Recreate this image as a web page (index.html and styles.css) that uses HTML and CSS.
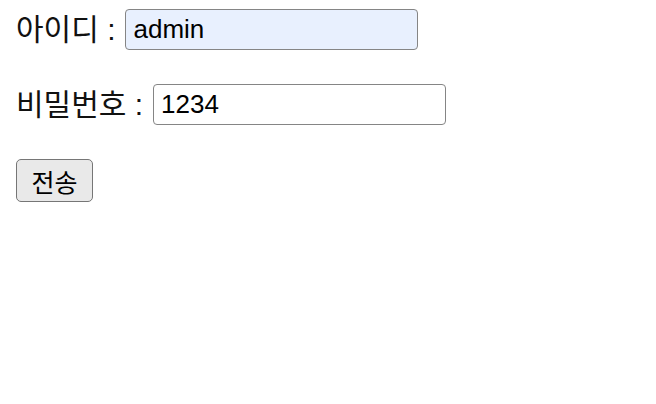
FILE: index.html
```html
<!DOCTYPE html>
<html lang="ko">
<head>
<meta charset="utf-8">
<link rel="stylesheet" href="styles.css">
</head>
<body>
<form class="form">
  <div class="row">
    <label class="label" for="id">아이디 :</label>
    <input class="field field-auto" id="id" type="text" value="admin">
  </div>
  <div class="row">
    <label class="label" for="pw">비밀번호 :</label>
    <input class="field" id="pw" type="text" value="1234">
  </div>
  <div class="row">
    <button class="btn" type="button">전송</button>
  </div>
</form>
</body>
</html>
```
FILE: styles.css
```css
html, body {
  margin: 0;
  background: #ffffff;
}
body {
  padding: 9px 16px;
  font-family: "Liberation Sans", "Noto Sans CJK KR", Arial, sans-serif;
  color: #000;
}
.form {
  display: flex;
  flex-direction: column;
  gap: 34px;
  margin: 0;
}
.row {
  display: flex;
  align-items: center;
  gap: 10px;
}
.label {
  font-family: "Liberation Sans", "Noto Sans CJK KR", sans-serif;
  font-size: 30px;
  line-height: 34px;
  color: #111;
}
.field {
  box-sizing: border-box;
  width: 293px;
  height: 41px;
  margin: 0;
  padding: 0 7px;
  border: 1.5px solid #858585;
  border-radius: 4px;
  background: #fff;
  font-family: "Liberation Sans", Arial, sans-serif;
  font-size: 26px;
  color: #000;
  outline: none;
}
.field-auto {
  background: #e8f0fe;
}
.btn {
  box-sizing: border-box;
  width: 77px;
  height: 43px;
  margin: 0;
  padding: 0;
  border: 1.5px solid #767676;
  border-radius: 5px;
  background: #e9e9e9;
  font-family: "Noto Sans CJK KR", sans-serif;
  font-size: 25px;
  color: #000;
}
```
